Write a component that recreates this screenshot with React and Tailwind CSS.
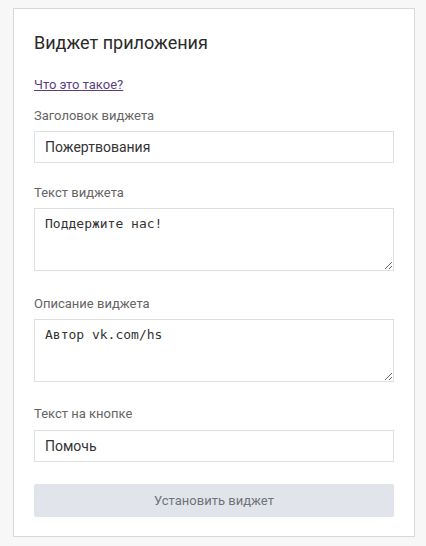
import React from 'react';

const labelCls = "block text-[13px] leading-4 text-[#656565]";
const inputCls =
  "block w-[360px] h-8 border border-[#dcdfe3] bg-white px-[10px] text-[14px] text-[#333] outline-none";
const areaCls =
  "block w-[360px] h-[63px] border border-[#dcdfe3] bg-white px-[10px] pt-[6px] text-[13px] leading-[17px] text-[#333] outline-none";

export default function App() {
  return (
    <div
      className="min-h-[546px] bg-[#f7f7f7] pt-2 pl-[13px]"
      style={{ fontFamily: 'Roboto, "Open Sans", sans-serif' }}
    >
      <div className="w-[402px] border border-[#d7d8da] bg-white px-5 pt-[22px] pb-[19px]">
        <h2 className="text-[18px] leading-6 text-[#2a2a2a] font-normal">
          Виджет приложения
        </h2>

        <a href="#" className="mt-[22px] block w-fit text-[13px] leading-4 text-[#5b3f82] underline">
          Что это такое?
        </a>

        <label className={`${labelCls} mt-[15px]`}>Заголовок виджета</label>
        <input className={`${inputCls} mt-[7px]`} defaultValue="Пожертвования" />

        <label className={`${labelCls} mt-[22px]`}>Текст виджета</label>
        <textarea
          className={`${areaCls} mt-[7px]`}
          style={{ fontFamily: '"DejaVu Sans Mono", monospace' }}
          defaultValue="Поддержите нас!"
        />

        <label className={`${labelCls} mt-[25px]`}>Описание виджета</label>
        <textarea
          className={`${areaCls} mt-[7px]`}
          style={{ fontFamily: '"DejaVu Sans Mono", monospace' }}
          defaultValue="Автор vk.com/hs"
        />

        <label className={`${labelCls} mt-[24px]`}>Текст на кнопке</label>
        <input className={`${inputCls} mt-[8px]`} defaultValue="Помочь" />

        <button className="mt-[22px] block h-[33px] w-[360px] rounded-[2px] bg-[#e1e5eb] text-[13px] text-[#6f7379]">
          Установить виджет
        </button>
      </div>
    </div>
  );
}
